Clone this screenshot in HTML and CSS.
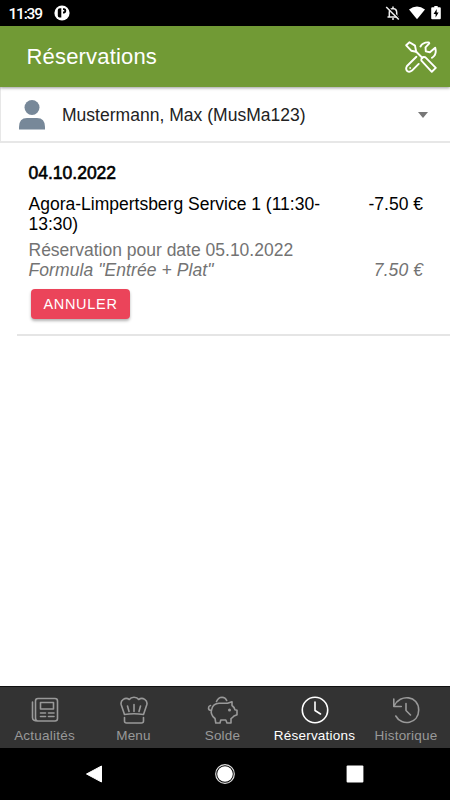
FILE: index.html
```html
<!DOCTYPE html>
<html lang="fr">
<head>
<meta charset="utf-8">
<title>Réservations</title>
<link rel="stylesheet" href="styles.css">
</head>
<body>
<div class="screen">
  <div class="status">
    <span class="time">11:39</span>
    <svg class="app-dot" width="16" height="16" viewBox="0 0 16 16"><circle cx="8" cy="8" r="7.600" fill="#fff"/><path d="M7.300 3.200H6Q3.800 3.200 3.800 5v5.600Q3.800 12.600 5.500 12.600h1.800z" fill="#000"/><path d="M9 3.200h1.300q2 .3 2 2.600t-2 2.600H9V6.500h1.200V5H9z" fill="#000"/></svg>
    <svg class="system" width="58" height="16" viewBox="0 0 58 16">
      <g fill="none" stroke="#eee" stroke-width="1.500"><path d="M2.500 12h11M4.300 12V7.500Q4.300 3.800 8 3.500q3.700.3 3.700 4V12M8 1.500v2"/><path d="M7 14h2"/><path d="M2.200 1.500 14.700 13.800" stroke="#000" stroke-width="1.500"/><path d="M1.200 2 13.800 14.500"/></g>
      <path d="M24 4.500Q32 -1.500 40 4.500L32 14.300z" fill="#fff"/>
      <path d="M49.300 1h3.400v1.300h2.100q1 0 1 1v10q0 1-1 1h-7.600q-1 0-1-1v-10q0-1 1-1h2.100z" fill="#fff"/><path d="M51.700 4 48.600 8.900h2v3.600l3-4.900h-1.900z" fill="#000"/>
    </svg>
  </div>
  <header class="header">
    <h1>Réservations</h1>
    <svg class="tools" width="32" height="32" viewBox="0 0 32 32" fill="none" stroke="#fff" stroke-width="1.900" stroke-linejoin="round" stroke-linecap="round">
      <path d="M1.200 4.300 4.500 1.200 10 4.600 11.200 10.800 6.200 9.700z"/>
      <path d="M11.200 10.800 17.500 17"/>
      <path d="M16.400 19.600Q15.800 15.300 20.200 16.200L30.800 26.900 26.800 30.800z"/>
      <path d="M11.400 15.800 2 25Q.2 28 2.200 30q2.200 1.700 4.800-.4l6.700-6.700"/>
      <path d="M15.500 5.500Q17.800 1 23.700 1.400L24.300 2.300 20.500 6.300 20.800 10.400 24.900 11.300 30.200 6.700Q32.200 13.500 27 16.700"/>
      <circle cx="5" cy="27" r=".4" stroke-width="1"/>
    </svg>
  </header>
  <div class="account">
    <svg class="person" width="26" height="30" viewBox="0 0 26 30" fill="#778899"><circle cx="13" cy="7.500" r="7.500"/><path d="M0 29.500V27q0-9 8-9h10q8 0 8 9v2.500z"/></svg>
    <span class="account-name">Mustermann, Max (MusMa123)</span>
    <span class="caret"></span>
  </div>
  <main class="content">
    <section class="booking">
      <div class="date">04.10.2022</div>
      <div class="line service"><span class="place">Agora-Limpertsberg Service 1 (11:30-13:30)</span><span>-7.50 €</span></div>
      <div class="muted">Réservation pour date 05.10.2022</div>
      <div class="line muted formula"><span>Formula "Entrée + Plat"</span><span>7.50 €</span></div>
      <button class="cancel">ANNULER</button>
    </section>
  </main>
  <nav class="tabs">
    <div class="tab">
      <svg width="28" height="28" viewBox="0 0 28 28"><path d="M6.500 25Q1.500 25 1.500 21.500V6M6.500 25Q4.500 24.500 4.500 22V5q0-2.500 2.500-2.500h17q2.500 0 2.500 2.500v17.500q0 2.500-2.500 2.500H6.500z"/><path d="M9.500 6.500h13v6.500h-13zM9.500 17h5m3 0h5.500M9.500 20.500h5m3 0h5.500"/></svg>
      <span>Actualités</span>
    </div>
    <div class="tab">
      <svg width="28" height="28" viewBox="0 0 28 28"><path d="M4.500 18.500 1.300 9C-.2 4 5.500.8 9.300 3.500 11.200.5 16.800.5 18.700 3.500 22.500.8 28.200 4 26.700 9L23.500 18.500q-9.500-1.500-19 0zM4.500 21.500V25q0 2 2 2h15q2 0 2-2v-3.500M7.500 10l1.500 5.500M14 8.500v7M20.500 10l-1.500 5.500"/></svg>
      <span>Menu</span>
    </div>
    <div class="tab">
      <svg class="pig" width="32" height="28" viewBox="0 0 32 28"><path d="M4.800 13Q6 7.700 12 7.300h8.500L25 5.700v3.800q2.400 1.700 2.900 4.200l2.100.5v4.500l-3 1.300Q25.500 21.700 24 22.700V27h-4l-1.200-3h-5L13 27H8.800L8 22.500Q2.800 18.500 4.800 13zM4.500 14.500Q1.500 14.500 1.500 12q0-2 2-2.500M9.500 5.500Q11.300 1.200 15 1.200q3.500.1 4.700 3.300"/><circle cx="22.500" cy="14" r=".7"/></svg>
      <span>Solde</span>
    </div>
    <div class="tab tab-active">
      <svg width="28" height="28" viewBox="0 0 28 28"><circle cx="14" cy="14" r="12.700"/><path d="M14 6v8.500l5.500 3.500"/></svg>
      <span>Réservations</span>
    </div>
    <div class="tab">
      <svg width="28" height="28" viewBox="0 0 28 28"><path d="M1.800 3v7.500h7.500M2 10C8-2.500 26.700-.5 26.700 14c0 13.500-17 17-22.900 6M14 7.500v7l4.500 4.500"/></svg>
      <span>Historique</span>
    </div>
  </nav>
  <div class="system-nav">
    <svg width="18" height="18" viewBox="0 0 18 18"><path d="M1.500 9 16.500 1v16z" fill="#fff" stroke="#fff" stroke-linejoin="round"/></svg>
    <svg width="20" height="20" viewBox="0 0 20 20"><circle cx="10" cy="10" r="9.300" fill="none" stroke="#ddd" stroke-width="1.200"/><circle cx="10" cy="10" r="7.800" fill="#fff"/></svg>
    <svg width="18" height="18" viewBox="0 0 18 18"><rect x=".6" y=".6" width="16.800" height="16.800" rx="1" fill="#fff"/></svg>
  </div>
</div>
</body>
</html>
```

FILE: styles.css
```css
* { box-sizing: border-box; }
body {
  margin: 0;
  background: #fff;
  font-family: "Liberation Sans", Arial, sans-serif;
  color: #000;
}
svg { display: block; flex: none; }
.screen { height: 800px; display: flex; flex-direction: column; }
.status {
  height: 26px;
  background: #000;
  color: #fff;
  display: flex;
  align-items: center;
  padding: 0 7px 0 8.5px;
}
.time {
  width: 45.5px;
  padding-top: 2px;
  font: 500 15.5px/26px Roboto, sans-serif;
  letter-spacing: -1.2px;
  white-space: nowrap;
}
.system { margin-left: auto; }
.header {
  height: 61px;
  background: #719a35;
  color: #fff;
  display: flex;
  align-items: center;
  justify-content: space-between;
  padding: 0 13px 0 26.5px;
  box-shadow: 0 1px 3px rgba(0, 0, 0, .4);
  position: relative;
}
h1 { margin: 0; font-size: 22px; font-weight: 400; letter-spacing: .18px; }
.account {
  height: 56px;
  display: flex;
  align-items: center;
  padding: 2px 22px 0 18px;
  border: solid #e7e7e7;
  border-width: 0 0 2px 1px;
}
.account-name { margin-left: 17px; font-size: 17.5px; letter-spacing: .02px; color: #222; white-space: nowrap; }
.caret {
  margin-left: auto;
  border: 5px solid transparent;
  border-top: 6px solid #777;
  border-bottom: 0;
}
.content { flex: 1; padding-left: 17px; }
.booking {
  height: 193px;
  border-bottom: 2px solid #e5e5e5;
  padding: 20px 27px 0 11.5px;
  font-size: 17.5px;
  line-height: 20px;
}
.date { -webkit-text-stroke: .6px #000; }
.line { display: flex; justify-content: space-between; white-space: nowrap; }
.service { margin: 11px 0 6px; }
.place { width: 306px; white-space: normal; }
.muted { color: #737373; }
.formula { font-style: italic; letter-spacing: .08px; }
.cancel {
  display: block;
  width: 99px;
  height: 30px;
  margin: 9px 0 0 2.5px;
  padding: 0;
  border: 0;
  border-radius: 4px;
  background: #eb445a;
  color: #fff;
  font: 14.5px "Liberation Sans", Arial, sans-serif;
  letter-spacing: .7px;
  box-shadow: 0 2px 3px rgba(0, 0, 0, .3);
}
.tabs {
  height: 62px;
  background: #333;
  border-top: 1px solid #111;
  display: grid;
  grid-template-columns: 89px 89px 89px 95px 88px;
  color: #999;
  font-size: 13.5px;
  letter-spacing: .22px;
}
.tab {
  display: flex;
  flex-direction: column;
  align-items: center;
  padding-top: 9px;
  gap: 4px;
  line-height: 16px;
  white-space: nowrap;
}
.tab svg { fill: none; stroke: currentColor; stroke-width: 1.6; stroke-linecap: round; stroke-linejoin: round; }
.tab-active { color: #fff; }
.system-nav {
  height: 52px;
  background: #000;
  display: flex;
  align-items: center;
  justify-content: space-between;
  padding: 0 86px 0 85px;
}
```
